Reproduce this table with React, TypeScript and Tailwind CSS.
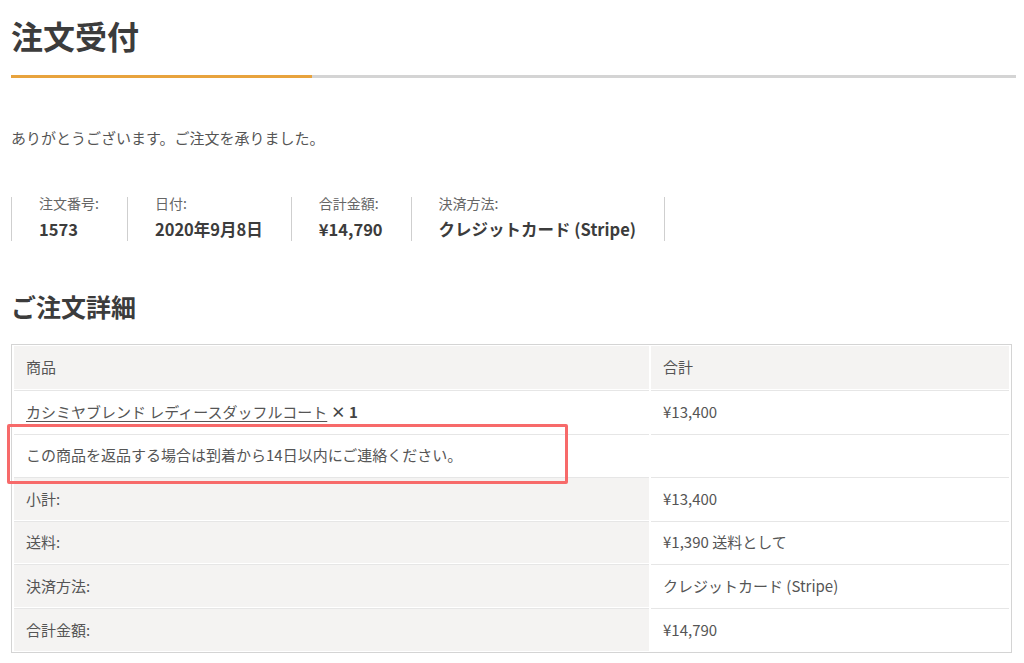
import React from 'react';

type Overview = { label: string; value: string };

const overview: Overview[] = [
    { label: '注文番号:', value: '1573' },
    { label: '日付:', value: '2020年9月8日' },
    { label: '合計金額:', value: '¥14,790' },
    { label: '決済方法:', value: 'クレジットカード (Stripe)' },
];

const totals = [
    { label: '小計:', value: '¥13,400' },
    { label: '送料:', value: '¥1,390 送料として' },
    { label: '決済方法:', value: 'クレジットカード (Stripe)' },
    { label: '合計金額:', value: '¥14,790' },
];

const font = { fontFamily: '"Noto Sans CJK JP", "Noto Sans", sans-serif' };

export default function App() {
    return (
        <div className="min-h-screen bg-white px-[11px] text-[#555]" style={font}>
            {/* page title */}
            <div className="pt-[13px]">
                <h1 className="text-[32px] leading-[44px] font-bold text-[#3c3c3c]">注文受付</h1>
                <div className="mt-[18px] mr-[-3px] flex h-[3px]">
                    <div className="w-[301px] bg-[#e8a33d]"></div>
                    <div className="flex-1 bg-[#d4d4d4]"></div>
                </div>
            </div>

            <p className="mt-[48px] text-[15px] leading-[24px]">ありがとうございます。ご注文を承りました。</p>

            {/* order overview */}
            <ul className="mt-[47px] flex">
                {overview.map((o, i) => (
                    <li
                        key={o.label}
                        className={
                            'border-l border-[#cfcfcf] pl-[27px] pr-[28px] pb-[2px]' +
                            (i === overview.length - 1 ? ' border-r' : '')
                        }
                    >
                        <div className="text-[14px] leading-[12px] text-[#666]">{o.label}</div>
                        <div className="mt-[10px] text-[16.5px] leading-[20px] font-bold text-[#3c3c3c]">{o.value}</div>
                    </li>
                ))}
            </ul>

            <h2 className="mt-[47px] text-[25px] leading-[36px] font-bold text-[#3c3c3c]">ご注文詳細</h2>

            {/* order details */}
            <div className="relative mt-[20px] mr-[1px]">
                <table className="w-full border border-[#d4d4d4] border-separate border-spacing-x-[2px] border-spacing-y-[1px] text-[15px] text-[#555]">
                    <thead>
                        <tr>
                            <th className="w-[635px] bg-[#f4f3f2] px-[12px] h-[43px] text-left font-normal">商品</th>
                            <th className="bg-[#f4f3f2] px-[12px] h-[43px] text-left font-normal">合計</th>
                        </tr>
                    </thead>
                    <tbody>
                        <tr>
                            <td className="border-t border-[#e6e6e6] px-[12px] h-[42.6px]">
                                <span className="underline underline-offset-[3px]">カシミヤブレンド レディースダッフルコート</span>{' '}
                                <strong className="font-bold text-[#444]">× 1</strong>
                            </td>
                            <td className="border-t border-[#e6e6e6] px-[12px] h-[42.6px]">¥13,400</td>
                        </tr>
                        <tr>
                            <td className="border-t border-[#e6e6e6] px-[12px] h-[42.6px]">
                                この商品を返品する場合は到着から14日以内にご連絡ください。
                            </td>
                            <td className="border-t border-[#e6e6e6] px-[12px] h-[42.6px]"></td>
                        </tr>
                        {totals.map((t) => (
                            <tr key={t.label}>
                                <td className="border-t border-[#e6e6e6] bg-[#f4f3f2] px-[12px] h-[42.6px]">{t.label}</td>
                                <td className="border-t border-[#e6e6e6] px-[12px] h-[42.6px]">{t.value}</td>
                            </tr>
                        ))}
                    </tbody>
                </table>

                {/* highlight annotation */}
                <div className="pointer-events-none absolute left-[-4px] top-[80px] h-[60px] w-[561px] rounded-[2px] border-[3px] border-[#f76a6a]"></div>
            </div>
        </div>
    );
}
